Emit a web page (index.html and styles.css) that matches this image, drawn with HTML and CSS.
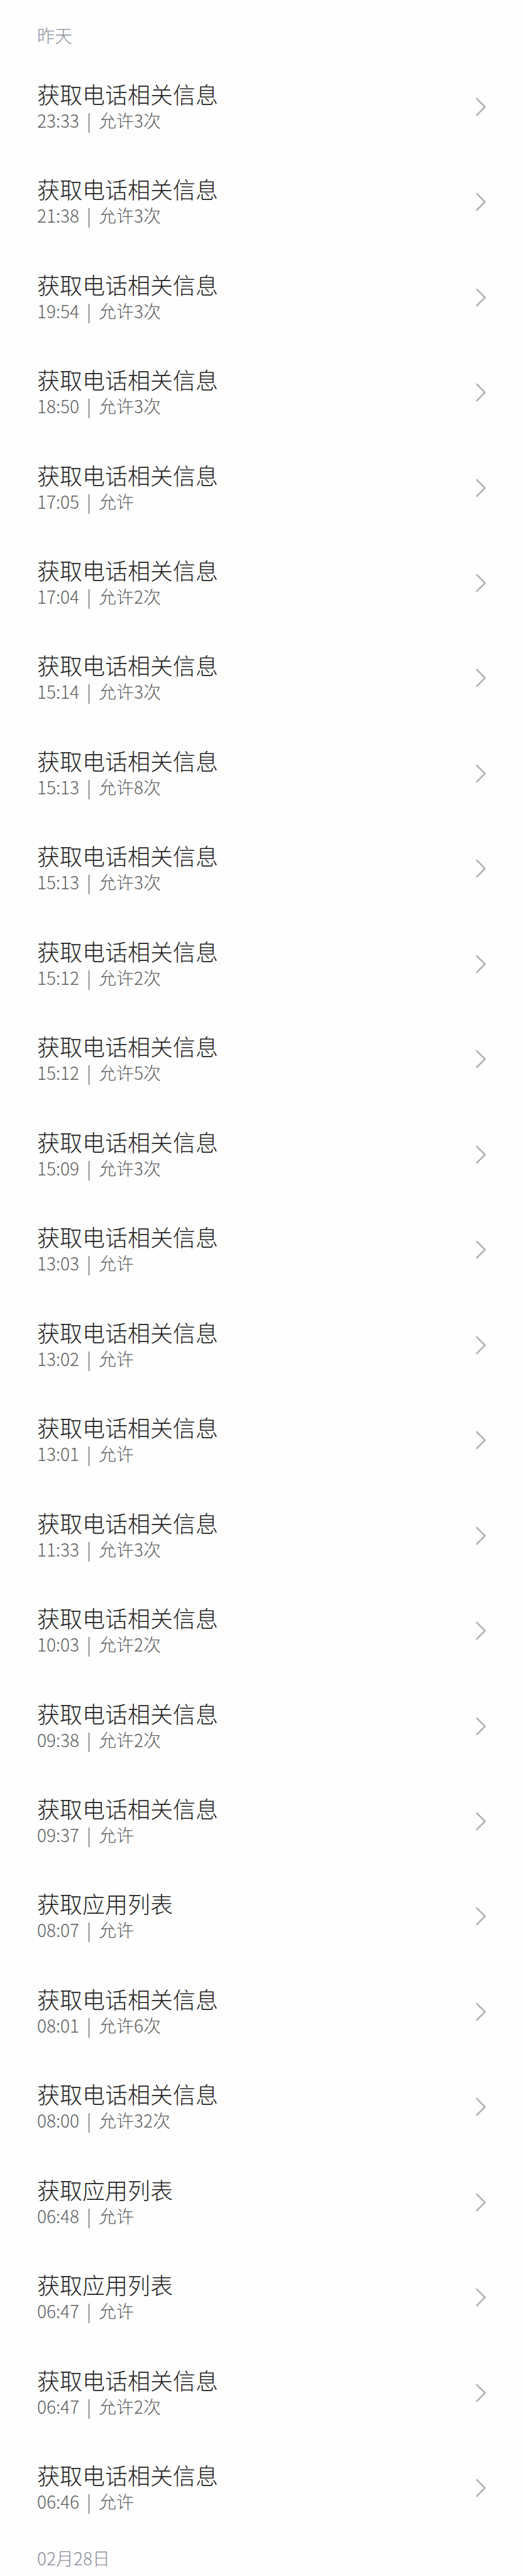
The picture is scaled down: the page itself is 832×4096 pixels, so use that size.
FILE: index.html
```
<!DOCTYPE html>
<html lang="zh-CN">
<head>
    <meta charset="UTF-8">
    <meta name="viewport" content="width=device-width, initial-scale=1.0">
    <title>权限使用记录</title>
    <link rel="stylesheet" href="styles.css">
</head>
<body>
    <h2 class="day">昨天</h2>
    <ul class="record-list" id="recordList"></ul>
    <h2 class="day day-next">02月28日</h2>
    <script>
        const PHONE = '获取电话相关信息';
        const APPS = '获取应用列表';

        // [时间, 权限, 次数]
        const records = [
            ['23:33', PHONE, 3],
            ['21:38', PHONE, 3],
            ['19:54', PHONE, 3],
            ['18:50', PHONE, 3],
            ['17:05', PHONE, 1],
            ['17:04', PHONE, 2],
            ['15:14', PHONE, 3],
            ['15:13', PHONE, 8],
            ['15:13', PHONE, 3],
            ['15:12', PHONE, 2],
            ['15:12', PHONE, 5],
            ['15:09', PHONE, 3],
            ['13:03', PHONE, 1],
            ['13:02', PHONE, 1],
            ['13:01', PHONE, 1],
            ['11:33', PHONE, 3],
            ['10:03', PHONE, 2],
            ['09:38', PHONE, 2],
            ['09:37', PHONE, 1],
            ['08:07', APPS, 1],
            ['08:01', PHONE, 6],
            ['08:00', PHONE, 32],
            ['06:48', APPS, 1],
            ['06:47', APPS, 1],
            ['06:47', PHONE, 2],
            ['06:46', PHONE, 1]
        ];

        const list = document.getElementById('recordList');
        records.forEach(([time, title, count]) => {
            const item = document.createElement('li');
            item.className = 'record-item';
            item.innerHTML = `
                <a class="record" href="#">
                    <div class="record-text">
                        <div class="record-title">${title}</div>
                        <div class="record-info">
                            <span>${time}</span>
                            <span class="record-sep">|</span>
                            <span>允许${count > 1 ? count + '次' : ''}</span>
                        </div>
                    </div>
                    <svg class="arrow" viewBox="0 0 16 30" aria-hidden="true"><path d="M1.5 2L14.5 15L1.5 28"/></svg>
                </a>
            `;
            list.appendChild(item);
        });
    </script>
</body>
</html>
```
FILE: styles.css
```
* { margin: 0; padding: 0; box-sizing: border-box; }
body {
    display: flex;
    flex-direction: column;
    min-height: 100vh;
    font-family: "Noto Sans CJK SC", sans-serif;
    font-weight: 300;
    background: #fefefe;
}
.day {
    padding: 36px 59px 18px;
    font-size: 28px;
    font-weight: 300;
    line-height: 40px;
    color: #8a8c9c;
}
.day-next { padding-top: 15px; padding-bottom: 9px; }
.record-list {
    flex: 1;
    display: grid;
    grid-auto-rows: 1fr;
    list-style: none;
}
.record-item { display: flex; }
.record {
    flex: 1;
    display: flex;
    align-items: center;
    justify-content: space-between;
    padding: 0 59px;
    color: #222;
    text-decoration: none;
}
.record-title { font-size: 36px; line-height: 42px; }
.record-info {
    display: flex;
    font-size: 28px;
    line-height: 42px;
    color: #5c5c5c;
}
.record-sep { margin: 0 12px; }
.arrow {
    width: 16px;
    height: 30px;
    fill: none;
    stroke: #b0b0b0;
    stroke-width: 2.5;
    stroke-linecap: round;
    stroke-linejoin: round;
}
```
